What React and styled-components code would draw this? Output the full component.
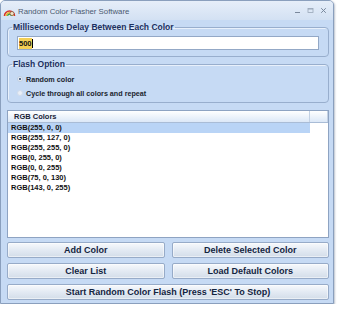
import styled, { createGlobalStyle } from 'styled-components';

const GlobalStyle = createGlobalStyle`
  html, body {
    margin: 0;
    padding: 0;
    background: #ffffff;
  }
  body {
    font-family: "Liberation Sans", Arial, sans-serif;
  }
`;

const Window = styled.div`
  width: 334px;
  height: 304px;
  box-sizing: border-box;
  border: 1px solid #8a9fbd;
  border-radius: 5px 5px 0 0;
  background: #c6daf4;
  display: flex;
  flex-direction: column;
  box-shadow: 1px 1px 2px rgba(60, 80, 110, 0.35);
  overflow: hidden;
`;

const TitleBar = styled.div`
  height: 19px;
  display: flex;
  align-items: center;
  padding: 0 6px 0 2px;
  background: linear-gradient(#e6eef9, #d3e1f3);
  gap: 2px;
`;

const TitleText = styled.div`
  flex: 1;
  font-size: 7.8px;
  color: #4b5a70;
  padding-top: 2px;
`;

const Controls = styled.div`
  display: flex;
  align-items: center;
  gap: 6px;
  color: #7a889c;
`;

const Body = styled.div`
  flex: 1;
  display: flex;
  flex-direction: column;
  padding: 0 4px 3px 6px;
`;

const Group = styled.fieldset`
  margin: ${(p) => p.$top}px 0 0 0;
  padding: 0 9px ${(p) => p.$bottom}px 9px;
  border: 1px solid #98aecd;
  border-radius: 4px;
  box-shadow: inset 1px 1px 0 rgba(255, 255, 255, 0.6);
  min-width: 0;
`;

const Legend = styled.legend`
  margin-left: -5px;
  padding: 0 1px;
  font-size: 8.5px;
  line-height: 10px;
  font-weight: 700;
  color: #1c3060;
`;

const Input = styled.div`
  margin-top: 4px;
  height: 14px;
  box-sizing: border-box;
  border: 1px solid #93a8c6;
  background: #ffffff;
  display: flex;
  align-items: center;
  padding-left: 1px;
  font-size: 7.5px;
  font-weight: 700;
  color: #111;
`;

const Selected = styled.span`
  background: #f3cf55;
  padding: 1px 0;
  line-height: 9px;
`;

const Caret = styled.span`
  width: 1px;
  height: 9px;
  background: #000;
`;

const Options = styled.div`
  padding-top: 3px;
  display: flex;
  flex-direction: column;
`;

const RadioRow = styled.label`
  height: 14px;
  display: flex;
  align-items: center;
  gap: 3px;
  font-size: 7.2px;
  font-weight: 700;
  color: #1a1f2e;
`;

const RadioDot = styled.span`
  width: 6px;
  height: 6px;
  border-radius: 50%;
  box-sizing: border-box;
  background: ${(p) => (p.$on ? 'radial-gradient(circle, #5a6f90 0 1.3px, #f2f6fb 1.6px)' : '#e9eff7')};
  border: 1px solid ${(p) => (p.$on ? '#c2cfe0' : '#d2dceb')};
`;

const List = styled.div`
  margin-top: 7px;
  height: 128px;
  box-sizing: border-box;
  border: 1px solid #8ea3c2;
  background: #ffffff;
  display: flex;
  flex-direction: column;
`;

const Header = styled.div`
  height: 11px;
  display: flex;
  border-bottom: 1px solid #a9bcd6;
  background: linear-gradient(#ffffff, #dce8f7);
`;

const HeaderCell = styled.div`
  width: ${(p) => p.$w}px;
  flex: ${(p) => (p.$w ? 'none' : 1)};
  box-sizing: border-box;
  border-right: 1px solid #c3d1e4;
  padding-left: 6px;
  font-size: 7.5px;
  line-height: 11px;
  font-weight: 700;
  color: #1a2236;
`;

const Row = styled.div`
  width: 302px;
  height: 10px;
  padding-left: 3px;
  box-sizing: border-box;
  font-size: 7.5px;
  line-height: 10px;
  font-weight: 700;
  color: #111;
  background: ${(p) => (p.$selected ? '#b9d4f6' : 'transparent')};
`;

const ButtonGrid = styled.div`
  margin-top: 4px;
  display: grid;
  grid-template-columns: 1fr 1fr;
  column-gap: 7px;
  row-gap: 5px;
`;

const Button = styled.button`
  grid-column: ${(p) => (p.$wide ? '1 / 3' : 'auto')};
  height: 16px;
  margin: 0;
  padding: 0;
  border: 1px solid #97abc8;
  border-radius: 2px;
  background: linear-gradient(#f7f9fc, #e3eaf3 50%, #d3dde9);
  font-family: "Liberation Sans", Arial, sans-serif;
  font-size: 9px;
  font-weight: 700;
  color: #13243f;
  box-shadow: inset 0 0 0 1px rgba(255, 255, 255, 0.5);
`;

function AppIcon() {
  return (
    <svg width="13" height="12" viewBox="0 0 13 12">
      <path d="M1.5 11 A5 5 0 0 1 11.5 11" fill="none" stroke="#d8322a" strokeWidth="1.6" />
      <path d="M3.2 11 A3.3 3.3 0 0 1 9.8 11" fill="none" stroke="#f1b82a" strokeWidth="1.4" />
      <path d="M4.7 11 A1.8 1.8 0 0 1 8.3 11" fill="none" stroke="#3a9a3c" strokeWidth="1.2" />
      <circle cx="9" cy="8.5" r="2" fill="#f4e2c8" stroke="#6a4a2a" strokeWidth="0.6" />
    </svg>
  );
}

function WindowControls() {
  return (
    <Controls>
      <svg width="7" height="7" viewBox="0 0 7 7">
        <path d="M1 5.5 H6" stroke="#7a889c" strokeWidth="1" />
      </svg>
      <svg width="7" height="7" viewBox="0 0 7 7">
        <rect x="1" y="1.5" width="5" height="4" fill="none" stroke="#9aa7b8" strokeWidth="0.8" />
        <path d="M1 2 H6" stroke="#9aa7b8" strokeWidth="1" />
      </svg>
      <svg width="7" height="7" viewBox="0 0 7 7">
        <path d="M1.2 1.2 L5.8 5.8 M5.8 1.2 L1.2 5.8" stroke="#7a889c" strokeWidth="1" />
      </svg>
    </Controls>
  );
}

const colors = [
  'RGB(255, 0, 0)',
  'RGB(255, 127, 0)',
  'RGB(255, 255, 0)',
  'RGB(0, 255, 0)',
  'RGB(0, 0, 255)',
  'RGB(75, 0, 130)',
  'RGB(143, 0, 255)',
];

export default function App() {
  return (
    <>
      <GlobalStyle />
      <Window>
        <TitleBar>
          <AppIcon />
          <TitleText>Random Color Flasher Software</TitleText>
          <WindowControls />
        </TitleBar>
        <Body>
          <Group $top={2} $bottom={6}>
            <Legend>Milliseconds Delay Between Each Color</Legend>
            <Input>
              <Selected>500</Selected>
              <Caret />
            </Input>
          </Group>
          <Group $top={2} $bottom={2}>
            <Legend>Flash Option</Legend>
            <Options>
              <RadioRow>
                <RadioDot $on />
                Random color
              </RadioRow>
              <RadioRow>
                <RadioDot />
                Cycle through all colors and repeat
              </RadioRow>
            </Options>
          </Group>
          <List>
            <Header>
              <HeaderCell $w={302}>RGB Colors</HeaderCell>
              <HeaderCell />
            </Header>
            {colors.map((c, i) => (
              <Row key={c} $selected={i === 0}>
                {c}
              </Row>
            ))}
          </List>
          <ButtonGrid>
            <Button>Add Color</Button>
            <Button>Delete Selected Color</Button>
            <Button>Clear List</Button>
            <Button>Load Default Colors</Button>
            <Button $wide>Start Random Color Flash (Press 'ESC' To Stop)</Button>
          </ButtonGrid>
        </Body>
      </Window>
    </>
  );
}
